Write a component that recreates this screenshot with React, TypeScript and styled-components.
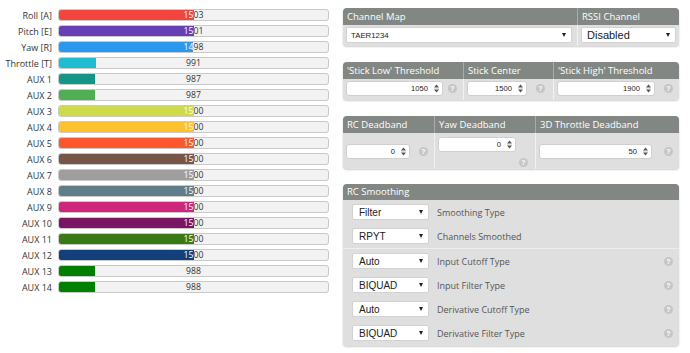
import React from 'react';
import styled, { createGlobalStyle } from 'styled-components';

const GlobalStyle = createGlobalStyle`
  html, body { margin: 0; padding: 0; background: #ffffff; }
  body { font-family: 'Open Sans', 'Liberation Sans', sans-serif; }
`;

const Page = styled.div`
  display: flex;
  align-items: flex-start;
  gap: 14px;
  padding-top: 7px;
  width: 690px;
  height: 353px;
  box-sizing: border-box;
  overflow: hidden;
`;

/* ---------- left: channel bars ---------- */

const Channels = styled.div`
  display: grid;
  grid-template-columns: 52px 271px;
  column-gap: 6px;
  grid-auto-rows: 16px;
  align-items: center;
`;

const ChannelName = styled.div`
  font-size: 9px;
  color: #333;
  text-align: right;
  white-space: nowrap;
`;

const Track = styled.div`
  position: relative;
  height: 12px;
  box-sizing: border-box;
  border: 1px solid #c9c9c9;
  border-radius: 3px;
  background: #f2f2f2;
  overflow: hidden;
`;

const Fill = styled.div<{ $color: string }>`
  position: relative;
  z-index: 1;
  height: 100%;
  background: ${p => p.$color};
  overflow: hidden;
`;

const ValueText = styled.span<{ $light?: boolean }>`
  position: absolute;
  top: 0;
  left: 0;
  width: 269px;
  height: 100%;
  display: flex;
  align-items: center;
  justify-content: center;
  font-size: 8.7px;
  line-height: 1;
  color: ${p => (p.$light ? '#ffffff' : '#333333')};
`;

const channels: { name: string; value: number; color: string }[] = [
  { name: 'Roll [A]', value: 1503, color: '#f1453d' },
  { name: 'Pitch [E]', value: 1501, color: '#673fb4' },
  { name: 'Yaw [R]', value: 1498, color: '#2b98f0' },
  { name: 'Throttle [T]', value: 991, color: '#1fbcd2' },
  { name: 'AUX 1', value: 987, color: '#159588' },
  { name: 'AUX 2', value: 987, color: '#50ae55' },
  { name: 'AUX 3', value: 1500, color: '#cdda49' },
  { name: 'AUX 4', value: 1500, color: '#fdc02f' },
  { name: 'AUX 5', value: 1500, color: '#fc5830' },
  { name: 'AUX 6', value: 1500, color: '#785549' },
  { name: 'AUX 7', value: 1500, color: '#9e9e9e' },
  { name: 'AUX 8', value: 1500, color: '#617d8a' },
  { name: 'AUX 9', value: 1500, color: '#cf267d' },
  { name: 'AUX 10', value: 1500, color: '#7a1464' },
  { name: 'AUX 11', value: 1500, color: '#3a7a14' },
  { name: 'AUX 12', value: 1500, color: '#14407a' },
  { name: 'AUX 13', value: 988, color: '#008000' },
  { name: 'AUX 14', value: 988, color: '#008000' },
];

const ChannelBar: React.FC<{ value: number; color: string }> = ({ value, color }) => {
  const pct = Math.max(0, Math.min(1, (value - 800) / 1400)) * 100;
  return (
    <Track>
      <ValueText>{value}</ValueText>
      <Fill $color={color} style={{ width: `${pct}%` }}>
        <ValueText $light>{value}</ValueText>
      </Fill>
    </Track>
  );
};

/* ---------- right: panels ---------- */

const Side = styled.div`
  width: 336px;
  margin-top: 1px;
  display: flex;
  flex-direction: column;
`;

const Panel = styled.section<{ $cols: string; $mt?: number }>`
  display: grid;
  grid-template-columns: ${p => p.$cols};
  margin-top: ${p => p.$mt ?? 0}px;
  background: #dfdfdf;
  border-radius: 4px;
  overflow: hidden;
  box-shadow: 0 1px 2px rgba(0, 0, 0, 0.2);
`;

const Head = styled.div<{ $sep?: boolean; $h?: number }>`
  background: #828784;
  color: #ffffff;
  font-size: 9.5px;
  height: ${p => p.$h ?? 17}px;
  line-height: ${p => p.$h ?? 17}px;
  padding-left: 4px;
  white-space: nowrap;
  border-left: ${p => (p.$sep ? '1px solid #a7aba9' : 'none')};
`;

const Cell = styled.div<{ $sep?: boolean; $pad: string; $dir?: string; $align?: string }>`
  display: flex;
  flex-direction: ${p => p.$dir ?? 'row'};
  align-items: ${p => p.$align ?? 'center'};
  justify-content: space-between;
  padding: ${p => p.$pad};
  border-left: ${p => (p.$sep ? '1px solid #f1f1f1' : 'none')};
`;

const SelectBox = styled.div<{ $w: number; $fs: number; $h?: number; $padL?: number }>`
  width: ${p => p.$w}px;
  height: ${p => p.$h ?? 16}px;
  box-sizing: border-box;
  background: #ffffff;
  border: 1px solid #d2d2d2;
  border-radius: 2px;
  display: flex;
  align-items: center;
  justify-content: space-between;
  padding: 0 5px 0 ${p => p.$padL ?? 4}px;
  font-family: 'Liberation Sans', Arial, sans-serif;
  font-size: ${p => p.$fs}px;
  color: #222;
  flex: none;
`;

const Arrow = styled.span`
  width: 0;
  height: 0;
  border-left: 2.5px solid transparent;
  border-right: 2.5px solid transparent;
  border-top: 4px solid #222;
`;

const NumBox = styled.div<{ $w: number }>`
  width: ${p => p.$w}px;
  height: 15px;
  box-sizing: border-box;
  background: #ffffff;
  border: 1px solid #d0d0d0;
  border-radius: 3px;
  display: flex;
  align-items: center;
  justify-content: flex-end;
  gap: 6px;
  padding-right: 3px;
  font-family: 'Liberation Sans', Arial, sans-serif;
  font-size: 7.6px;
  color: #222;
  flex: none;
`;

const Help = styled.span<{ $self?: string; $mt?: number }>`
  width: 9px;
  height: 9px;
  border-radius: 50%;
  background: #c6c6c6;
  color: #ffffff;
  font-family: 'Liberation Sans', Arial, sans-serif;
  font-weight: bold;
  font-size: 7px;
  line-height: 9px;
  text-align: center;
  flex: none;
  align-self: ${p => p.$self ?? 'auto'};
  margin-top: ${p => p.$mt ?? 0}px;
`;

const Spinner = () => (
  <svg width="5" height="9" viewBox="0 0 5 9">
    <polygon points="0,3.6 2.5,0.6 5,3.6" fill="#555" />
    <line x1="0" y1="4.5" x2="5" y2="4.5" stroke="#cfcfcf" strokeWidth="0.6" />
    <polygon points="0,5.4 2.5,8.4 5,5.4" fill="#555" />
  </svg>
);

const NumInput: React.FC<{ w: number; value: number }> = ({ w, value }) => (
  <NumBox $w={w}>
    <span>{value}</span>
    <Spinner />
  </NumBox>
);

const Select: React.FC<{ w: number; fs: number; text: string; padL?: number }> = ({ w, fs, text, padL }) => (
  <SelectBox $w={w} $fs={fs} $padL={padL}>
    <span>{text}</span>
    <Arrow />
  </SelectBox>
);

/* smoothing */

const SmoothBody = styled.div`
  padding: 0 0 1px;
`;

const SmoothGroup = styled.div<{ $divider?: boolean }>`
  border-top: ${p => (p.$divider ? '1px solid #eeeeee' : 'none')};
`;

const SmoothRow = styled.div`
  display: flex;
  align-items: center;
  height: 24px;
  padding: 0 6px 0 9px;
`;

const SmoothLabel = styled.span`
  flex: 1;
  margin-left: 8px;
  font-size: 9px;
  color: #555;
  white-space: nowrap;
`;

const smoothTop = [
  { value: 'Filter', label: 'Smoothing Type' },
  { value: 'RPYT', label: 'Channels Smoothed' },
];
const smoothBottom = [
  { value: 'Auto', label: 'Input Cutoff Type' },
  { value: 'BIQUAD', label: 'Input Filter Type' },
  { value: 'Auto', label: 'Derivative Cutoff Type' },
  { value: 'BIQUAD', label: 'Derivative Filter Type' },
];

export default function App() {
  return (
    <>
      <GlobalStyle />
      <Page>
        <Channels>
          {channels.map(c => (
            <React.Fragment key={c.name}>
              <ChannelName>{c.name}</ChannelName>
              <ChannelBar value={c.value} color={c.color} />
            </React.Fragment>
          ))}
        </Channels>

        <Side>
          <Panel $cols="234px 1fr">
            <Head>Channel Map</Head>
            <Head $sep>RSSI Channel</Head>
            <Cell $pad="2px 5px 3px 3px">
              <Select w={226} fs={7.8} text="TAER1234" padL={4} />
            </Cell>
            <Cell $sep $pad="2px 3px 3px 3px">
              <Select w={95} fs={11} text="Disabled" padL={5} />
            </Cell>
          </Panel>

          <Panel $cols="120px 90px 1fr" $mt={16}>
            <Head>'Stick Low' Threshold</Head>
            <Head $sep>Stick Center</Head>
            <Head $sep>'Stick High' Threshold</Head>
            <Cell $pad="2px 6px 4px 3px">
              <NumInput w={97} value={1050} />
              <Help>?</Help>
            </Cell>
            <Cell $sep $pad="2px 8px 4px 3px">
              <NumInput w={60} value={1500} />
              <Help>?</Help>
            </Cell>
            <Cell $sep $pad="2px 6px 4px 3px">
              <NumInput w={98} value={1900} />
              <Help>?</Help>
            </Cell>
          </Panel>

          <Panel $cols="91px 101px 1fr" $mt={16}>
            <Head>RC Deadband</Head>
            <Head $sep>Yaw Deadband</Head>
            <Head $sep>3D Throttle Deadband</Head>
            <Cell $pad="0 6px 0 3px">
              <NumInput w={64} value={0} />
              <Help>?</Help>
            </Cell>
            <Cell $sep $pad="4px 7px 2px 3px" $dir="column" $align="flex-start">
              <NumInput w={78} value={0} />
              <Help $self="flex-end" $mt={6}>?</Help>
            </Cell>
            <Cell $sep $pad="0 6px 0 3px">
              <NumInput w={113} value={50} />
              <Help>?</Help>
            </Cell>
          </Panel>

          <Panel $cols="1fr" $mt={15}>
            <Head $h={16}>RC Smoothing</Head>
            <SmoothBody>
              <SmoothGroup>
                {smoothTop.map(r => (
                  <SmoothRow key={r.label}>
                    <Select w={77} fs={10} text={r.value} padL={6} />
                    <SmoothLabel>{r.label}</SmoothLabel>
                  </SmoothRow>
                ))}
              </SmoothGroup>
              <SmoothGroup $divider>
                {smoothBottom.map(r => (
                  <SmoothRow key={r.label}>
                    <Select w={77} fs={10} text={r.value} padL={6} />
                    <SmoothLabel>{r.label}</SmoothLabel>
                    <Help>?</Help>
                  </SmoothRow>
                ))}
              </SmoothGroup>
            </SmoothBody>
          </Panel>
        </Side>
      </Page>
    </>
  );
}
